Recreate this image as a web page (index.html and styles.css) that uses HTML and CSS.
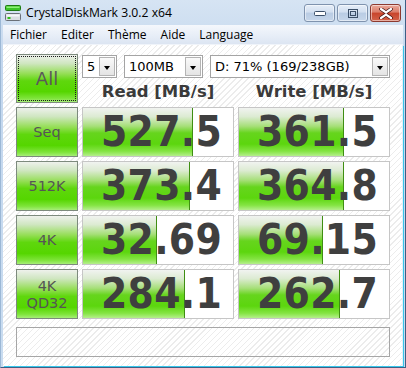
FILE: index.html
```html
<!DOCTYPE html>
<html>
<head>
<meta charset="utf-8">
<link rel="stylesheet" href="styles.css">
</head>
<body>
<div class="window">
  <div class="titlebar">
    <svg class="app-icon" width="16" height="16" viewBox="0 0 16 16">
      <rect x="0.5" y="0.5" width="15" height="5" rx="1" fill="#3ec62a" stroke="#1f7a14"/>
      <rect x="1.5" y="1.5" width="13" height="1.5" fill="#8ff07a"/>
      <rect x="0.5" y="8.5" width="15" height="7" rx="1" fill="#d9dde2" stroke="#6a7078"/>
      <rect x="1.5" y="9.5" width="13" height="2" fill="#f4f6f8"/>
      <rect x="2.5" y="12" width="3" height="2" fill="#2fbf1a"/>
    </svg>
    <span class="title">CrystalDiskMark 3.0.2 x64</span>
    <div class="controls">
      <div class="ctl">
        <svg width="12" height="5" viewBox="0 0 12 5"><rect x="0.5" y="0.5" width="11" height="4" rx="1" fill="#fff" stroke="#3b4f68"/></svg>
      </div>
      <div class="ctl">
        <svg width="10" height="9" viewBox="0 0 10 9"><rect x="0.5" y="0.5" width="9" height="8" fill="none" stroke="#3b4f68"/><rect x="2.5" y="2.5" width="5" height="4" fill="none" stroke="#3b4f68"/></svg>
      </div>
      <div class="ctl close">
        <svg width="14" height="11" viewBox="0 0 14 11"><path d="M2 1 L7 4.5 L12 1 M2 10 L7 6.5 L12 10" fill="none" stroke="#3a1010" stroke-width="3.6" stroke-linecap="round"/><path d="M2 1 L7 4.5 L12 1 M2 10 L7 6.5 L12 10" fill="none" stroke="#fff" stroke-width="2.2" stroke-linecap="round"/></svg>
      </div>
    </div>
  </div>
  <div class="menubar">
    <span class="menu-item">Fichier</span>
    <span class="menu-item">Editer</span>
    <span class="menu-item">Thème</span>
    <span class="menu-item">Aide</span>
    <span class="menu-item">Language</span>
  </div>
  <div class="client">
    <div class="grid">
      <div class="btn btn-all"><span class="focus">All</span></div>
      <div class="top-block">
        <div class="selects">
          <div class="combo c-count"><span class="combo-text">5</span><span class="arrow"></span></div>
          <div class="combo c-size"><span class="combo-text">100MB</span><span class="arrow"></span></div>
          <div class="combo c-drive"><span class="combo-text">D: 71% (169/238GB)</span><span class="arrow"></span></div>
        </div>
        <div class="headers">
          <div class="head">Read [MB/s]</div>
          <div class="head">Write [MB/s]</div>
        </div>
      </div>

      <div class="btn">Seq</div>
      <div class="cell"><div class="bar" style="width:110px"></div><span class="val">527.5</span></div>
      <div class="cell"><div class="bar" style="width:105px"></div><span class="val">361.5</span></div>

      <div class="btn">512K</div>
      <div class="cell"><div class="bar" style="width:107px"></div><span class="val">373.4</span></div>
      <div class="cell"><div class="bar" style="width:105px"></div><span class="val">364.8</span></div>

      <div class="btn">4K</div>
      <div class="cell"><div class="bar" style="width:74px"></div><span class="val">32.69</span></div>
      <div class="cell"><div class="bar" style="width:84px"></div><span class="val">69.15</span></div>

      <div class="btn two">4K<br>QD32</div>
      <div class="cell"><div class="bar" style="width:102px"></div><span class="val">284.1</span></div>
      <div class="cell"><div class="bar" style="width:101px"></div><span class="val">262.7</span></div>

      <div class="comment"></div>
    </div>
  </div>
</div>
</body>
</html>
```
FILE: styles.css
```css
* { box-sizing: border-box; }
html, body { margin: 0; padding: 0; }
body { width: 406px; height: 368px; overflow: hidden; background: #fff; }

.window {
  width: 406px;
  height: 368px;
  display: flex;
  flex-direction: column;
  background: linear-gradient(to bottom, #d6e4f3, #c3d7ee 60px, #c9dcf0);
  border-left: 1px solid #9cb8d6;
  border-right: 1px solid #3d5f85;
  border-bottom: 1px solid #3d5f85;
  padding: 0 2px 1px 2px;
}

.titlebar {
  height: 25px;
  flex: none;
  display: flex;
  align-items: center;
  margin: 0 -2px;
  padding: 0 0 0 4px;
  font-family: "Open Sans", "Noto Sans", sans-serif;
}
.app-icon { flex: none; }
.title {
  margin-left: 5px;
  font-size: 12.2px;
  color: #000;
}
.controls {
  margin-left: auto;
  display: flex;
  gap: 2px;
  margin-right: 4px;
  align-self: flex-start;
  margin-top: 4px;
}
.ctl {
  width: 31px;
  height: 18px;
  border: 1px solid #7f93ae;
  border-radius: 3px;
  background: linear-gradient(to bottom, #e6eef8 0%, #d2dff0 45%, #b9cce4 50%, #c6d6ea 100%);
  display: flex;
  align-items: center;
  justify-content: center;
  box-shadow: inset 0 0 0 1px rgba(255,255,255,0.5);
}
.ctl.close {
  border-color: #8c3a30;
  background: linear-gradient(to bottom, #e9a99b 0%, #dc7d69 45%, #c8442b 50%, #d3634a 100%);
}

.menubar {
  height: 20px;
  flex: none;
  display: flex;
  align-items: center;
  background: linear-gradient(to bottom, #f4f7fc, #e6edf7 60%, #dce5f2);
  border-bottom: 1px solid #f0f4fa;
  font-family: "Open Sans", "Noto Sans", sans-serif;
  font-size: 12px;
  color: #000;
}
.menu-item { padding: 0 7px; }

.client {
  flex: 1;
  background-color: #fff;
  background-image: repeating-linear-gradient(135deg, #fff 0px, #fff 3.2px, #ececec 3.2px, #ececec 4.2px);
  padding: 9px 11px 0 13px;
  border-right: 1px solid #e6eef8;
  box-shadow: 1px 1px 0 #37c6ea;
}

.grid {
  display: grid;
  grid-template-columns: 62px 152px 152px;
  grid-template-rows: 49px 50px 50px 50px 50px 30px;
  column-gap: 4px;
  row-gap: 4px;
}

.btn {
  border: 1px solid #7d8a7d;
  background: linear-gradient(to bottom, #eef1ec 0%, #cfe6c0 18%, #94de55 40%, #5fd70d 55%, #55d600 78%, #7ee43a 92%, #a6ee78 100%);
  display: flex;
  align-items: center;
  justify-content: center;
  text-align: center;
  font-family: "DejaVu Sans", sans-serif;
  font-size: 14.5px;
  color: #555;
  line-height: 17px;
}
.btn.two { padding-top: 1px; }
.btn-all { padding: 1px; }
.btn-all .focus {
  width: 100%;
  height: 100%;
  border: 1px dotted #1a1a1a;
  display: flex;
  align-items: center;
  justify-content: center;
  font-size: 18px;
  color: #5a5a5a;
}

.top-block {
  grid-column: 2 / span 2;
  display: flex;
  flex-direction: column;
}
.selects {
  display: flex;
  gap: 7px;
  margin-top: 1px;
  height: 23px;
}
.combo {
  height: 23px;
  border: 1px solid #a4a4a4;
  background: #fff;
  display: flex;
  align-items: center;
  padding: 1px 1px 1px 4px;
  font-family: "DejaVu Sans", sans-serif;
  font-size: 13px;
  color: #000;
}
.c-count { width: 35px; }
.c-size { width: 79px; }
.c-drive { width: 180px; }
.combo-text { flex: 1; white-space: nowrap; }
.arrow {
  flex: none;
  width: 16px;
  height: 19px;
  border: 1px solid #b4b4b4;
  background: linear-gradient(to bottom, #fafafa, #e4e4e4);
  position: relative;
}
.arrow::after {
  content: "";
  position: absolute;
  left: 4px;
  top: 8px;
  border-left: 3.5px solid transparent;
  border-right: 3.5px solid transparent;
  border-top: 4px solid #000;
}

.headers {
  flex: 1;
  display: grid;
  grid-template-columns: 152px 152px;
  column-gap: 4px;
  align-items: center;
}
.head {
  text-align: center;
  font-family: "DejaVu Sans", sans-serif;
  font-weight: bold;
  font-size: 16.5px;
  color: #3a3a3a;
  padding-top: 2px;
}

.cell {
  position: relative;
  border: 1px solid #c6c6c6;
  background: #fff;
  display: flex;
  align-items: center;
  justify-content: flex-end;
  padding-right: 11px;
  overflow: hidden;
}
.bar {
  position: absolute;
  left: 0;
  top: 0;
  bottom: 0;
  border-right: 1px solid #3f8e12;
  background: linear-gradient(to bottom, #f1f3f0 0%, #dcebd2 18%, #a6df78 38%, #66d51d 52%, #5cd60e 75%, #84e443 90%, #b5ef8c 100%);
}
.val {
  position: relative;
  font-family: "DejaVu Sans Condensed", "DejaVu Sans", sans-serif;
  font-stretch: condensed;
  font-weight: bold;
  font-size: 42px;
  line-height: 48px;
  color: #3f3f3f;
  letter-spacing: 0.3px;
}

.comment {
  grid-column: 1 / span 3;
  margin-top: 4px;
  height: 30px;
  border: 1px solid #a6a6a6;
}
```
